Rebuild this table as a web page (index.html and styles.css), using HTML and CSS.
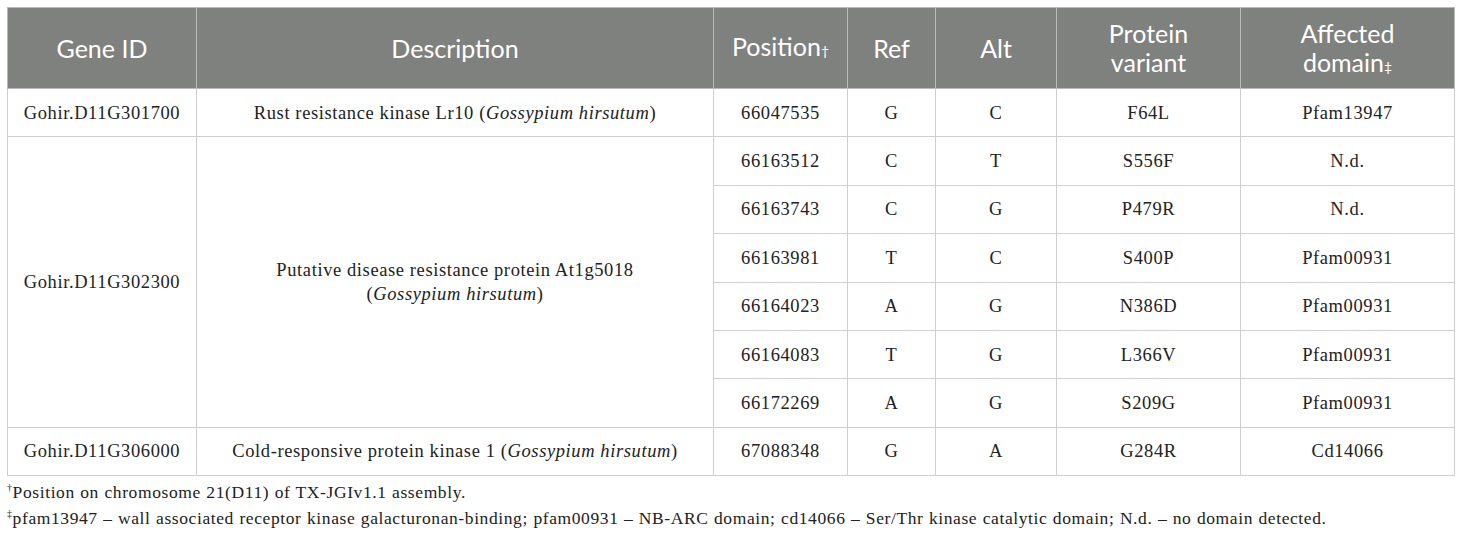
FILE: index.html
```html
<!DOCTYPE html>
<html>
<head>
<meta charset="utf-8">
<link rel="stylesheet" href="styles.css">
</head>
<body>
<div class="wrap">
<table class="tbl">
<colgroup>
<col class="c1"><col class="c2"><col class="c3"><col class="c4"><col class="c5"><col class="c6"><col class="c7">
</colgroup>
<thead>
<tr>
<th>Gene ID</th>
<th>Description</th>
<th>Position<span class="fn">†</span></th>
<th>Ref</th>
<th>Alt</th>
<th><div class="hl">Protein</div><div class="hl">variant</div></th>
<th><div class="hl">Affected</div><div class="hl">domain<span class="fn">‡</span></div></th>
</tr>
</thead>
<tbody>
<tr>
<td>Gohir.D11G301700</td>
<td>Rust resistance kinase Lr10 (<i>Gossypium hirsutum</i>)</td>
<td>66047535</td><td>G</td><td>C</td><td>F64L</td><td>Pfam13947</td>
</tr>
<tr>
<td rowspan="6">Gohir.D11G302300</td>
<td rowspan="6"><div>Putative disease resistance protein At1g5018</div><div>(<i>Gossypium hirsutum</i>)</div></td>
<td>66163512</td><td>C</td><td>T</td><td>S556F</td><td>N.d.</td>
</tr>
<tr><td>66163743</td><td>C</td><td>G</td><td>P479R</td><td>N.d.</td></tr>
<tr><td>66163981</td><td>T</td><td>C</td><td>S400P</td><td>Pfam00931</td></tr>
<tr><td>66164023</td><td>A</td><td>G</td><td>N386D</td><td>Pfam00931</td></tr>
<tr><td>66164083</td><td>T</td><td>G</td><td>L366V</td><td>Pfam00931</td></tr>
<tr><td>66172269</td><td>A</td><td>G</td><td>S209G</td><td>Pfam00931</td></tr>
<tr>
<td>Gohir.D11G306000</td>
<td>Cold-responsive protein kinase 1 (<i>Gossypium hirsutum</i>)</td>
<td>67088348</td><td>G</td><td>A</td><td>G284R</td><td>Cd14066</td>
</tr>
</tbody>
</table>
<div class="notes">
<p><sup>†</sup>Position on chromosome 21(D11) of TX-JGIv1.1 assembly.</p>
<p><sup>‡</sup>pfam13947 – wall associated receptor kinase galacturonan-binding; pfam00931 – NB-ARC domain; cd14066 – Ser/Thr kinase catalytic domain; N.d. – no domain detected.</p>
</div>
</div>
</body>
</html>
```
FILE: styles.css
```css
html, body {
  margin: 0;
  padding: 0;
  background: #ffffff;
}
.wrap {
  padding: 7px 0 0 7px;
}
.tbl {
  border-collapse: collapse;
  table-layout: fixed;
  width: 1447px;
  font-family: "Liberation Serif", "Times New Roman", serif;
  color: #222;
}
.c1 { width: 189px; }
.c2 { width: 517px; }
.c3 { width: 134px; }
.c4 { width: 88px; }
.c5 { width: 121px; }
.c6 { width: 184px; }
.c7 { width: 214px; }
.tbl th {
  background: #7f817f;
  color: #ffffff;
  font-family: "Lato", "Open Sans", sans-serif;
  font-weight: 400;
  font-size: 25px;
  line-height: 29px;
  height: 80px;
  padding: 0 4px;
  border: 1px solid #b9b9b9;
  text-align: center;
  vertical-align: middle;
}
.tbl th .hl {
  height: 29px;
  line-height: 29px;
}
.tbl th .fn {
  font-size: 14px;
  vertical-align: baseline;
}
.tbl td {
  font-size: 18.5px;
  letter-spacing: 0.6px;
  line-height: 24px;
  height: 48.4px;
  padding: 0 4px;
  border: 1px solid #cfcfcf;
  text-align: center;
  vertical-align: middle;
  box-sizing: border-box;
}
.notes {
  font-family: "Liberation Serif", "Times New Roman", serif;
  font-size: 17.5px;
  letter-spacing: 0.6px;
  word-spacing: 0.5px;
  color: #222;
  padding-top: 3px;
}
.notes p {
  margin: 0;
  line-height: 26px;
}
.notes sup {
  font-size: 10px;
  vertical-align: 7px;
  line-height: 0;
}
```
